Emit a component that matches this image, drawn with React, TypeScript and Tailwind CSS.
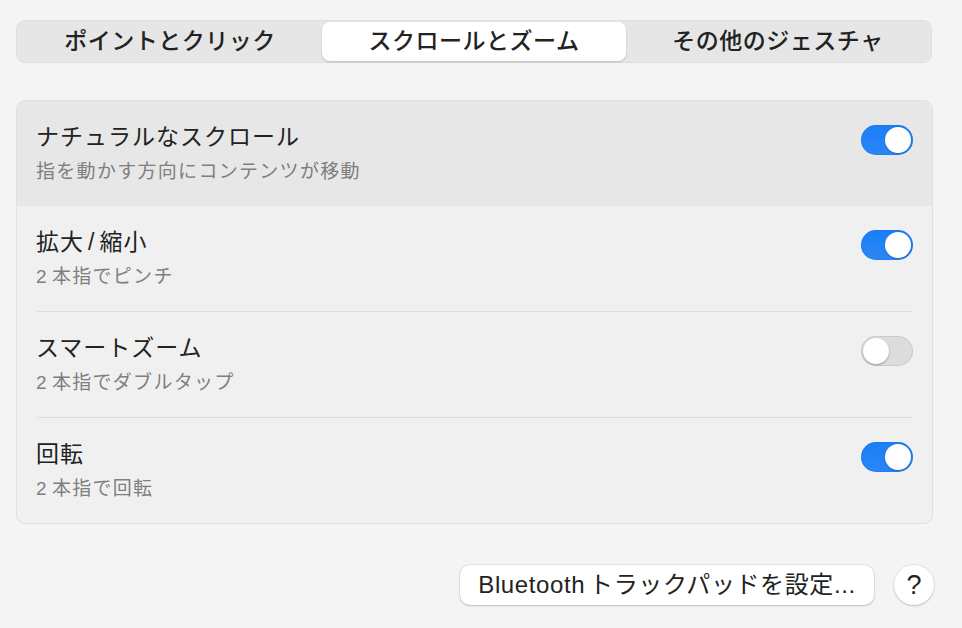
const font = "font-['Liberation_Sans','Noto_Sans_CJK_JP',sans-serif]"

const tabs = ['ポイントとクリック', 'スクロールとズーム', 'その他のジェスチャ']

const rows = [
  { title: <>ナチュラルなスクロール</>, sub: <>指を動かす方向にコンテンツが移動</>, on: true, active: true },
  { title: <>拡大<span className="mx-[4px]">/</span>縮小</>, sub: <><span className="mr-[4px]">2</span>本指でピンチ</>, on: true, active: false },
  { title: <>スマートズーム</>, sub: <><span className="mr-[4px]">2</span>本指でダブルタップ</>, on: false, active: false },
  { title: <>回転</>, sub: <><span className="mr-[4px]">2</span>本指で回転</>, on: true, active: false },
]

function Toggle({ on }: { on: boolean }) {
  if (on) {
    return (
      <div className="mt-[2px] flex h-[30px] w-[52px] shrink-0 items-center justify-end rounded-full bg-gradient-to-b from-[#1a7ff4] to-[#2a86f7] pr-[2px] shadow-[inset_0_0_0_1px_rgba(0,80,200,0.15)]">
        <div className="h-[26px] w-[26px] rounded-full bg-white shadow-[0_1px_2px_rgba(0,0,0,0.2)]" />
      </div>
    )
  }
  return (
    <div className="mt-[2px] flex h-[30px] w-[52px] shrink-0 items-center rounded-full bg-[#dcdcdc] pl-[2px] shadow-[inset_0_0_0_1px_rgba(0,0,0,0.08)]">
      <div className="h-[26px] w-[26px] rounded-full bg-white shadow-[0_1px_2px_rgba(0,0,0,0.3)]" />
    </div>
  )
}

export default function App() {
  return (
    <div className={`${font} min-h-[628px] w-[962px] bg-[#f4f4f4] pl-[16px] pt-[20px] text-[#222]`}>
      <div className="flex h-[43px] w-[916px] rounded-[9px] border border-[#dedede] bg-[#e6e6e6] p-[1px]">
        {tabs.map((t, i) => (
          <div
            key={t}
            className={`flex flex-1 items-center justify-center rounded-[8px] text-[23px] font-medium tracking-[0.5px] ${
              i === 1 ? 'bg-white shadow-[0_1px_2px_rgba(0,0,0,0.18)]' : ''
            }`}
          >
            {t}
          </div>
        ))}
      </div>

      <div className="mt-[37px] w-[917px] overflow-hidden rounded-[9px] border border-[#e0e0e0] bg-[#f0f0f0]">
        {rows.map((r, i) => (
          <div key={i}>
            {i > 1 && <div className="mx-[20px] h-px bg-[#dddddd]" />}
            <div
              className={`flex h-[105px] items-start justify-between px-[19px] pt-[22px] ${
                r.active ? 'bg-[#e7e7e7]' : ''
              }`}
            >
              <div>
                <div className="text-[23px] leading-[28px] tracking-[1px] text-[#222]">{r.title}</div>
                <div className="mt-[8px] text-[19px] leading-[26px] tracking-[1.3px] text-[#7f7f7f]">{r.sub}</div>
              </div>
              <Toggle on={r.on} />
            </div>
          </div>
        ))}
      </div>

      <div className="mt-[41px] flex w-[918px] justify-end gap-[20px]">
        <div className="flex h-[40px] w-[414px] items-center justify-center rounded-[10px] bg-white text-[24px] tracking-[0.6px] text-[#222] shadow-[0_0_0_1px_rgba(0,0,0,0.06),0_1px_2px_rgba(0,0,0,0.18)]">
          <span className="mr-[4px]">Bluetooth</span>トラックパッドを設定...
        </div>
        <div className="flex h-[40px] w-[40px] items-center justify-center rounded-full bg-white text-[27px] font-medium text-[#222] shadow-[0_0_0_1px_rgba(0,0,0,0.06),0_1px_2px_rgba(0,0,0,0.18)]">
          ?
        </div>
      </div>
    </div>
  )
}
